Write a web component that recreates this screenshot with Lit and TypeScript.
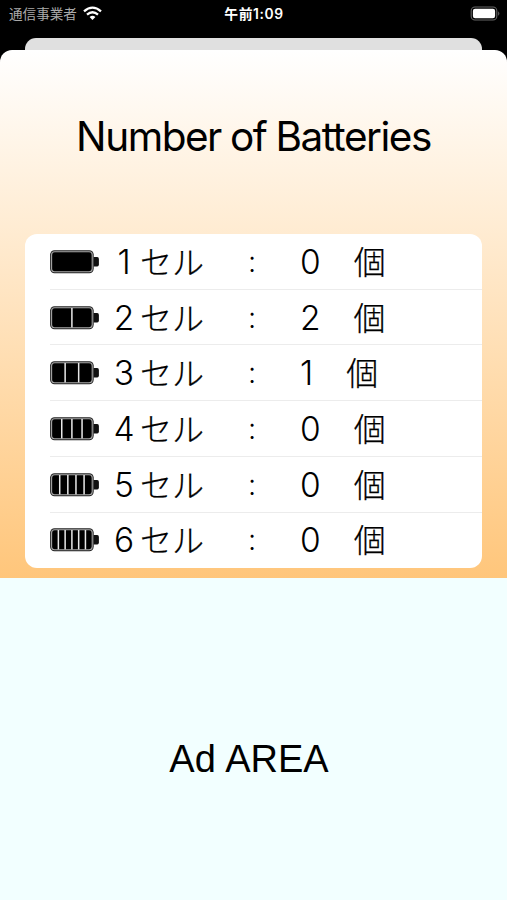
import { LitElement, html, css, svg } from "lit";
import { customElement, property } from "lit/decorators.js";

@customElement("cell-battery")
class CellBattery extends LitElement {
  @property({ type: Number }) cells = 1;

  static styles = css`
    :host { display: block; width: 50px; height: 26px; }
    .icon { display: block; }
  `;

  render() {
    const left = 1.6;
    const right = 42.2;
    const step = (right - left) / this.cells;
    const gaps = Array.from({ length: this.cells - 1 }, (_, i) => left + step * (i + 1));
    return html`
      <svg class="icon" width="50" height="26" viewBox="0 0 50 26">
        <rect x="0.1" y="1.2" width="43.6" height="23" rx="4.4" fill="#222" />
        <rect x="1.6" y="2.7" width="40.6" height="20" rx="3" fill="#000" stroke="#a8a8a8" stroke-width="1.1" />
        <path d="M43.6 7.9H47.2Q48.9 8.1 48.9 9.9V15.5Q48.9 17.3 47.2 17.5H43.6Z" fill="#111" />
        ${gaps.map((x) => svg`<rect x=${x - 0.75} y="3" width="1.5" height="19.4" fill="#e8e8e8" />`)}
      </svg>
    `;
  }
}

@customElement("app-root")
class AppRoot extends LitElement {
  private rows = [
    { cells: 1, count: 0 },
    { cells: 2, count: 2 },
    { cells: 3, count: 1 },
    { cells: 4, count: 0 },
    { cells: 5, count: 0 },
    { cells: 6, count: 0 },
  ];

  static styles = css`
    :host {
      display: flex;
      flex-direction: column;
      height: 900px;
      background: #000;
      color: #000;
      font-family: Inter, "Noto Sans CJK JP", sans-serif;
      overflow: hidden;
    }
    .status {
      display: grid;
      grid-template-columns: 1fr auto 1fr;
      align-items: center;
      box-sizing: border-box;
      height: 38px;
      padding: 0 6px 11px 9px;
      color: #fff;
      font-size: 13px;
      line-height: 20px;
    }
    .carrier { display: flex; align-items: center; gap: 6px; color: #aaa; font-size: 13.6px; }
    .time { font-weight: 600; font-size: 13.8px; letter-spacing: 0.6px; margin-right: 2px; }
    .power { justify-self: end; display: block; }
    .behind { flex: none; height: 12px; margin: 0 25px; border-radius: 11px 11px 0 0; background: #e0e0e0; }
    .sheet {
      flex: none;
      box-sizing: border-box;
      height: 528px;
      padding: 0 25px;
      border-radius: 12px 12px 0 0;
      background: linear-gradient(#fff, #ffc67b);
    }
    .title {
      margin: 0;
      height: 184px;
      line-height: 173px;
      text-align: center;
      font-size: 40.5px;
      font-weight: 400;
      letter-spacing: -1.47px;
      word-spacing: -0.8px;
      white-space: nowrap;
    }
    .list { height: 334.3px; border-radius: 12px; background: #fff; display: grid; grid-template-rows: repeat(6, 1fr); }
    .row { display: flex; align-items: center; margin-left: 25px; box-shadow: 0 -1px #ececec; }
    .row:first-child { box-shadow: none; }
    .cells, .colon, .count { font-size: 33.5px; line-height: 50px; font-weight: 350; }
    .cells { width: 32px; margin-left: 8px; text-align: center; }
    .label, .unit { font: 300 32px/50px "Noto Sans CJK JP", sans-serif; white-space: nowrap; padding-bottom: 4px; -webkit-text-stroke: 0.25px #000; }
    .label { width: 96px; }
    .colon { width: 32px; margin-right: 32px; text-align: center; font-size: 29px; }
    .unit { margin-left: 33px; }
    .ad {
      flex: 1;
      display: flex;
      align-items: center;
      justify-content: center;
      padding: 40px 9px 0 0;
      background: #f2ffff;
      font: 38px/44px "Liberation Sans", sans-serif;
      word-spacing: 1px;
    }
  `;

  render() {
    return html`
      <header class="status">
        <div class="carrier">
          <span>通信事業者</span>
          <svg width="19" height="15" viewBox="0 0 19 15" fill="none" stroke="#fff" stroke-width="2.3">
            <path d="M1 5.4Q9.5 -2.1 18 5.4" />
            <path d="M4 8.6Q9.5 3.8 15 8.6" />
            <path d="M6.6 10.9Q9.5 8.4 12.4 10.9L9.5 14Z" fill="#fff" stroke="none" />
          </svg>
        </div>
        <div class="time">午前1:09</div>
        <svg class="power" width="31" height="16" viewBox="0 0 31 16">
          <rect x="1.2" y="1" width="25.6" height="13" rx="3.8" fill="none" stroke="#666" stroke-width="1.1" />
          <rect x="2.9" y="2.7" width="22.2" height="9.6" rx="2.2" fill="#fff" />
          <path d="M28.2 5.2Q30.6 7.5 28.2 9.8Z" fill="#666" />
        </svg>
      </header>
      <div class="behind"></div>
      <main class="sheet">
        <h1 class="title">Number of Batteries</h1>
        <div class="list">
          ${this.rows.map(
            (r) => html`
              <div class="row">
                <cell-battery .cells=${r.cells}></cell-battery>
                <span class="cells">${r.cells}</span>
                <span class="label">セル</span>
                <span class="colon">:</span>
                <span class="count">${r.count}</span>
                <span class="unit">個</span>
              </div>
            `
          )}
        </div>
      </main>
      <footer class="ad">Ad AREA</footer>
    `;
  }
}
